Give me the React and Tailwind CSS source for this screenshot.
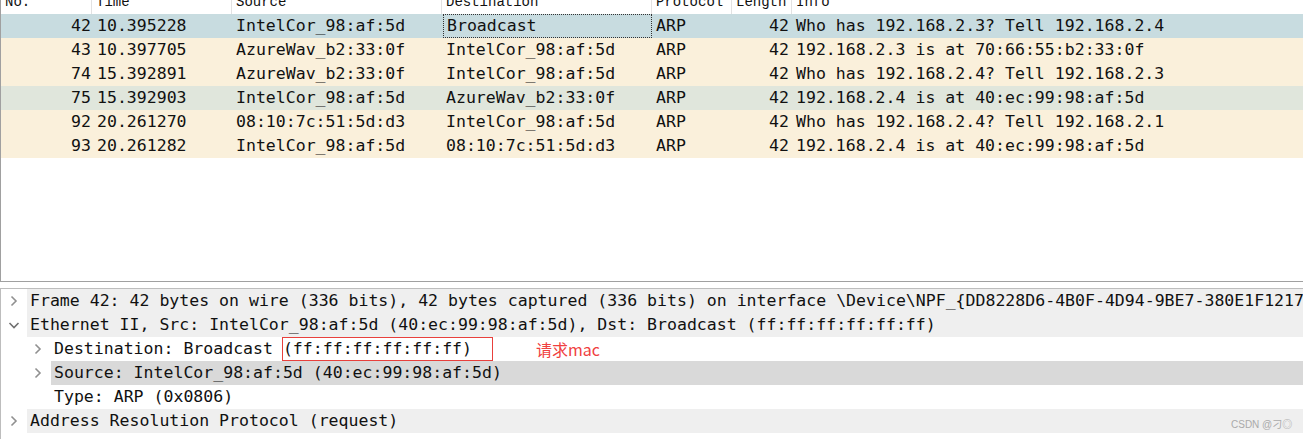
import React from "react";

const packets = [
  { no: 42, time: "10.395228", src: "IntelCor_98:af:5d", dst: "Broadcast", proto: "ARP", len: 42, info: "Who has 192.168.2.3? Tell 192.168.2.4", bg: "bg-[#c8dce0]", focus: true },
  { no: 43, time: "10.397705", src: "AzureWav_b2:33:0f", dst: "IntelCor_98:af:5d", proto: "ARP", len: 42, info: "192.168.2.3 is at 70:66:55:b2:33:0f", bg: "bg-[#faf0db]" },
  { no: 74, time: "15.392891", src: "AzureWav_b2:33:0f", dst: "IntelCor_98:af:5d", proto: "ARP", len: 42, info: "Who has 192.168.2.4? Tell 192.168.2.3", bg: "bg-[#faf0db]" },
  { no: 75, time: "15.392903", src: "IntelCor_98:af:5d", dst: "AzureWav_b2:33:0f", proto: "ARP", len: 42, info: "192.168.2.4 is at 40:ec:99:98:af:5d", bg: "bg-[#e0e6dc]" },
  { no: 92, time: "20.261270", src: "08:10:7c:51:5d:d3", dst: "IntelCor_98:af:5d", proto: "ARP", len: 42, info: "Who has 192.168.2.4? Tell 192.168.2.1", bg: "bg-[#faf0db]" },
  { no: 93, time: "20.261282", src: "IntelCor_98:af:5d", dst: "08:10:7c:51:5d:d3", proto: "ARP", len: 42, info: "192.168.2.4 is at 40:ec:99:98:af:5d", bg: "bg-[#faf0db]" },
];

// chevron for the detail tree
const Chevron = ({ open }) => (
  <svg width="12" height="12" viewBox="0 0 12 12" className="shrink-0">
    {open ? (
      <polyline points="1.5,4 6,8.5 10.5,4" fill="none" stroke="#707070" strokeWidth="1.6" />
    ) : (
      <polyline points="3.5,1.5 8,6 3.5,10.5" fill="none" stroke="#909090" strokeWidth="1.6" />
    )}
  </svg>
);

const TreeRow = ({ level, chevron, bg, children }) => (
  <div className="flex h-[24px] items-center whitespace-nowrap">
    <div className={level === 1 ? "w-[24px] shrink-0" : "hidden"}></div>
    <div className="w-[26px] shrink-0 flex justify-center">
      {chevron === "closed" && <Chevron />}
      {chevron === "open" && <Chevron open />}
    </div>
    <div className={`flex-1 h-full block leading-[24px] pl-[3px] ${bg}`}>{children}</div>
  </div>
);

const App = () => {
  return (
    <div className="w-[1303px] h-[439px] bg-white overflow-hidden text-[#111] font-['DejaVu_Sans_Mono',monospace] text-[16.55px] relative">
      {/* packet list */}
      <div className="h-[282px] border-l border-b border-[#a0a0a0]">
        <div className="flex h-[14px] overflow-hidden text-[14px] leading-[14px] font-['Liberation_Mono',monospace]">
          <div className="w-[91px] shrink-0 border-r border-[#e2e2e2] pl-[4px]"><div className="-mt-[5px]">No.</div></div>
          <div className="w-[140px] shrink-0 border-r border-[#e2e2e2] pl-[4px]"><div className="-mt-[5px]">Time</div></div>
          <div className="w-[210px] shrink-0 border-r border-[#e2e2e2] pl-[4px]"><div className="-mt-[5px]">Source</div></div>
          <div className="w-[210px] shrink-0 border-r border-[#e2e2e2] pl-[4px]"><div className="-mt-[5px]">Destination</div></div>
          <div className="w-[80px] shrink-0 border-r border-[#e2e2e2] pl-[4px]"><div className="-mt-[5px]">Protocol</div></div>
          <div className="w-[60px] shrink-0 border-r border-[#e2e2e2] pl-[4px]"><div className="-mt-[5px]">Length</div></div>
          <div className="flex-1 pl-[4px]"><div className="-mt-[5px]">Info</div></div>
        </div>
        {packets.map((p) => (
          <div key={p.no} className={`flex h-[24px] items-center whitespace-nowrap ${p.bg}`}>
            <div className="w-[91px] shrink-0 text-right pr-[1px]">{p.no}</div>
            <div className="w-[140px] shrink-0 pl-[5px]">{p.time}</div>
            <div className="w-[210px] shrink-0 pl-[4px]">{p.src}</div>
            <div
              className={`shrink-0 h-full flex items-center ${
                p.focus ? "border border-dotted border-[#333] pl-[3px] ml-[1px] w-[209px]" : "pl-[4px] w-[210px]"
              }`}
            >
              {p.dst}
            </div>
            <div className="w-[80px] shrink-0 pl-[4px]">{p.proto}</div>
            <div className="w-[60px] shrink-0 text-right pr-[3px]">{p.len}</div>
            <div className="flex-1 pl-[4px]">{p.info}</div>
          </div>
        ))}
      </div>

      {/* packet details */}
      <div className="mt-[6px] h-[151px] border-l border-t border-[#bdbdbd] overflow-hidden">
        <TreeRow level={0} chevron="closed" bg="bg-[#efefef]">
          Frame 42: 42 bytes on wire (336 bits), 42 bytes captured (336 bits) on interface \Device\NPF_{"{"}DD8228D6-4B0F-4D94-9BE7-380E1F1217C3{"}"}, id 0
        </TreeRow>
        <TreeRow level={0} chevron="open" bg="bg-[#efefef]">
          Ethernet II, Src: IntelCor_98:af:5d (40:ec:99:98:af:5d), Dst: Broadcast (ff:ff:ff:ff:ff:ff)
        </TreeRow>
        <TreeRow level={1} chevron="closed" bg="bg-white">
          Destination: Broadcast{" "}
          <span className="relative inline-block">
            (ff:ff:ff:ff:ff:ff)
            <span className="absolute left-[-1px] right-[-21px] top-0 bottom-0 border border-[#e8403c]"></span>
          </span>
          <span className="absolute left-[536px] font-['Noto_Sans_CJK_SC',sans-serif] text-[16px] text-[#f04040]">请求mac</span>
        </TreeRow>
        <TreeRow level={1} chevron="closed" bg="bg-[#d9d9d9]">
          Source: IntelCor_98:af:5d (40:ec:99:98:af:5d)
        </TreeRow>
        <TreeRow level={1} chevron="none" bg="bg-white">
          Type: ARP (0x0806)
        </TreeRow>
        <TreeRow level={0} chevron="closed" bg="bg-[#efefef]">
          Address Resolution Protocol (request)
        </TreeRow>
      </div>

      <div className="absolute left-[1231px] top-[417px] text-[10px] text-[#aaaaaa] font-['Liberation_Sans','Noto_Sans_CJK_SC',sans-serif]">
        CSDN @刁◎
      </div>
    </div>
  );
};

export default App;
